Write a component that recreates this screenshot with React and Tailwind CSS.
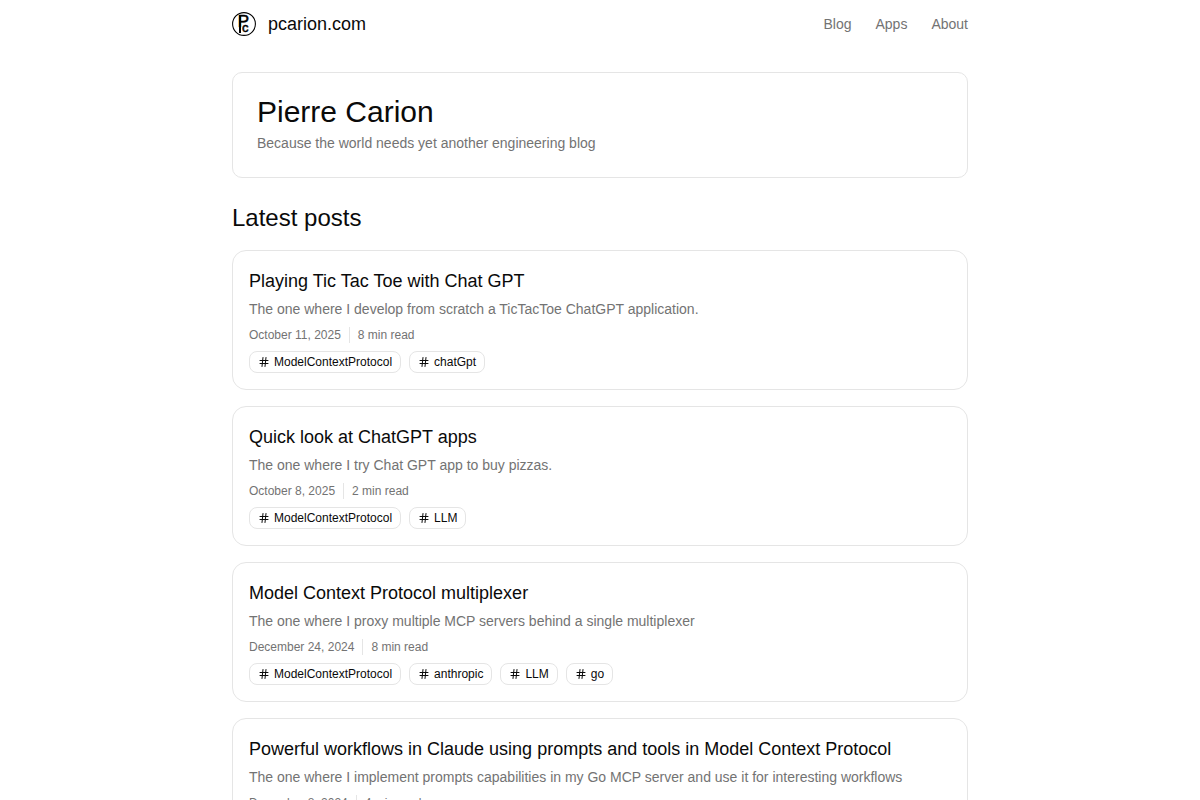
import { Hash } from "lucide-react";

const navLinks = ["Blog", "Apps", "About"];

const posts = [
  {
    title: "Playing Tic Tac Toe with Chat GPT",
    description:
      "The one where I develop from scratch a TicTacToe ChatGPT application.",
    date: "October 11, 2025",
    readTime: "8 min read",
    tags: ["ModelContextProtocol", "chatGpt"],
  },
  {
    title: "Quick look at ChatGPT apps",
    description: "The one where I try Chat GPT app to buy pizzas.",
    date: "October 8, 2025",
    readTime: "2 min read",
    tags: ["ModelContextProtocol", "LLM"],
  },
  {
    title: "Model Context Protocol multiplexer",
    description:
      "The one where I proxy multiple MCP servers behind a single multiplexer",
    date: "December 24, 2024",
    readTime: "8 min read",
    tags: ["ModelContextProtocol", "anthropic", "LLM", "go"],
  },
  {
    title:
      "Powerful workflows in Claude using prompts and tools in Model Context Protocol",
    description:
      "The one where I implement prompts capabilities in my Go MCP server and use it for interesting workflows",
    date: "December 8, 2024",
    readTime: "4 min read",
    tags: ["ModelContextProtocol", "anthropic", "LLM", "go"],
  },
];

function Logo() {
  return (
    <svg viewBox="0 0 24 24" className="size-6" aria-hidden="true">
      <circle cx="12" cy="12" r="11.4" fill="none" stroke="black" strokeWidth="1.1" />
      {/* Long stem shared by both letters */}
      <rect x="7" y="3" width="2" height="18" />
      <g fontFamily="Liberation Sans, sans-serif" stroke="black" strokeWidth="0.5">
        <text x="5.7" y="15.3" fontSize="17">
          P
        </text>
        <text x="10" y="20.3" fontSize="13">
          c
        </text>
      </g>
    </svg>
  );
}

function PostCard({ post }) {
  return (
    <article className="rounded-[14px] border border-neutral-200 p-4">
      <h3 className="text-lg leading-7">
        <a href="#">{post.title}</a>
      </h3>
      <p className="mt-1 text-sm text-neutral-500">{post.description}</p>
      <div className="mt-2 flex items-center gap-2 text-xs text-neutral-500">
        <time>{post.date}</time>
        <span className="h-4 w-px bg-neutral-200" />
        <span>{post.readTime}</span>
      </div>
      <ul className="mt-2 flex flex-wrap gap-2">
        {post.tags.map((tag) => (
          <li key={tag}>
            <a
              href="#"
              className="flex items-center gap-1 rounded-lg border border-neutral-200 px-2 py-0.5 text-xs"
            >
              <Hash className="size-3" />
              {tag}
            </a>
          </li>
        ))}
      </ul>
    </article>
  );
}

export default function App() {
  return (
    <div className="min-h-screen bg-white font-['Liberation_Sans',Arial,sans-serif] text-neutral-950">
      <div className="mx-auto max-w-3xl px-4">
        {/* Header */}
        <header className="flex h-12 items-center justify-between">
          <a href="#" className="flex items-center gap-3 text-lg">
            <Logo />
            pcarion.com
          </a>
          <nav className="flex gap-6 text-sm text-neutral-500">
            {navLinks.map((link) => (
              <a key={link} href="#">
                {link}
              </a>
            ))}
          </nav>
        </header>

        <main className="py-6">
          {/* Intro */}
          <section className="rounded-[10px] border border-neutral-200 p-6">
            <h1 className="text-3xl leading-none">Pierre Carion</h1>
            <p className="mt-1.5 text-sm text-neutral-500">
              Because the world needs yet another engineering blog
            </p>
          </section>

          {/* Posts */}
          <section className="mt-6">
            <h2 className="text-2xl">Latest posts</h2>
            <div className="mt-4 flex flex-col gap-4">
              {posts.map((post) => (
                <PostCard key={post.title} post={post} />
              ))}
            </div>
          </section>
        </main>
      </div>
    </div>
  );
}
